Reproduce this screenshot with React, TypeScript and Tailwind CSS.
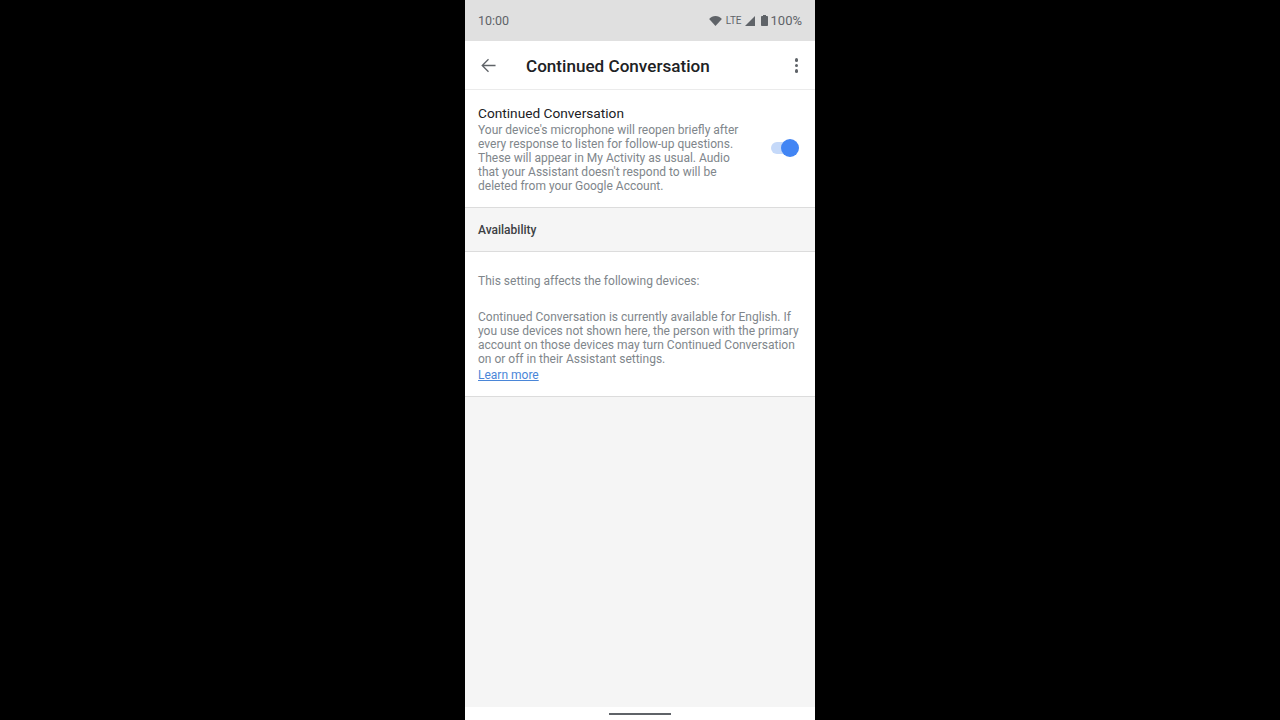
import React from 'react';

const Wifi = () => (
  <svg width="13" height="10" viewBox="0 0 14 11" className="fill-[#5f6368]">
    <path d="M7 11L0 3.200C1.800 1.200 4.300 0 7 0s5.200 1.200 7 3.200L7 11z" />
  </svg>
);

const Signal = () => (
  <svg width="10" height="10" viewBox="0 0 11 11" className="fill-[#5f6368]">
    <path d="M0 11L11 0v11H0z" />
  </svg>
);

const Battery = () => (
  <svg width="7" height="11" viewBox="0 0 7 11" className="fill-[#5f6368]">
    <path d="M2 0h3v1h1.200c.4 0 .8.4.8.8v8.400c0 .4-.4.8-.8.8H.8c-.4 0-.8-.4-.8-.8V1.800C0 1.400.4 1 .8 1H2V0z" />
  </svg>
);

const BackArrow = () => (
  <svg width="15" height="15" viewBox="0 0 16 16" fill="none" className="stroke-[#5f6368]" strokeWidth="1.4">
    <path d="M15.500 8H1.500M8 1.300L1.300 8 8 14.700" />
  </svg>
);

export default function App() {
  return (
    <div className="w-[1280px] h-[720px] bg-black flex justify-center overflow-hidden font-['Roboto',sans-serif]">
      <div className="w-[350px] h-[720px] flex flex-col bg-[#f5f5f5]">
        {/* Status bar */}
        <div className="h-[41px] shrink-0 bg-[#e0e0e0] flex items-center justify-between pl-[13px] pr-[13px] text-[#5f6368]">
          <span className="text-[12.500px] mt-[1px]">10:00</span>
          <div className="flex items-center">
            <Wifi />
            <span className="text-[10px] ml-[4px] mr-[3px]">LTE</span>
            <Signal />
            <span className="ml-[6px]"><Battery /></span>
            <span className="text-[13px] ml-[3px]">100%</span>
          </div>
        </div>

        {/* Toolbar */}
        <div className="h-[49px] shrink-0 bg-white border-b border-[#ebebeb] flex items-center pl-[16px] pr-[17px]">
          <BackArrow />
          <h1 className="ml-[30px] mt-[3px] flex-1 text-[17.100px] text-[#202124] font-medium">Continued Conversation</h1>
          <div className="flex flex-col gap-[2px] mt-[1px]">
            <span className="w-[3.500px] h-[3.500px] rounded-full bg-[#5f6368]" />
            <span className="w-[3.500px] h-[3.500px] rounded-full bg-[#5f6368]" />
            <span className="w-[3.500px] h-[3.500px] rounded-full bg-[#5f6368]" />
          </div>
        </div>

        {/* Setting row */}
        <div className="h-[118px] shrink-0 bg-white border-b border-[#dcdcdc] flex items-start pl-[13px] pr-[16px] pt-[14px]">
          <div className="flex-1">
            <div className="text-[13.700px] leading-[18px] text-[#202124]">Continued Conversation</div>
            <p className="mt-[1px] text-[12px] leading-[14px] text-[#80868b] w-[270px]">
              Your device's microphone will reopen briefly after every response to listen for follow-up questions. These will appear in My Activity as usual. Audio that your Assistant doesn't respond to will be deleted from your Google Account.
            </p>
          </div>
          <div className="relative mt-[34.500px] w-[28px] h-[18px] flex items-center">
            <div className="w-[26px] h-[12px] rounded-full bg-[#c5d9f9]" />
            <div className="absolute right-0 w-[18px] h-[18px] rounded-full bg-[#4285f4]" />
          </div>
        </div>

        {/* Section header */}
        <div className="h-[44px] shrink-0 bg-[#f5f5f5] border-b border-[#dcdcdc] flex items-center pl-[13px] text-[12px] font-medium text-[#3c4043]">
          Availability
        </div>

        {/* Details */}
        <div className="h-[145px] shrink-0 bg-white border-b border-[#dcdcdc] pl-[13px] pr-[12px] pt-[22px] text-[12px] leading-[14px] text-[#80868b]">
          <p>This setting affects the following devices:</p>
          <p className="mt-[22px]">
            Continued Conversation is currently available for English. If you use devices not shown here, the person with the primary account on those devices may turn Continued Conversation on or off in their Assistant settings.
          </p>
          <a className="block mt-[2px] text-[#4a86d8] underline">Learn more</a>
        </div>

        <div className="flex-1" />

        {/* Gesture nav */}
        <div className="h-[13px] shrink-0 bg-white flex justify-center pt-[6px]">
          <div className="w-[62px] h-[2px] bg-[#5f6368]" />
        </div>
      </div>
    </div>
  );
}
